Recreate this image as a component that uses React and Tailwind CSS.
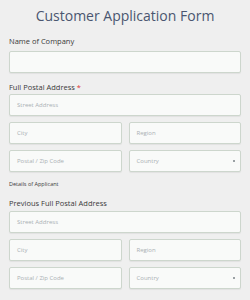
function Field({ placeholder, select }) {
  return (
    <div className="h-[22px] flex items-center justify-between border border-[#cdd6cd] bg-[#f9faf9] rounded-[2px] pl-[7px] pr-[5px] shadow-[0_1px_1px_rgba(0,0,0,0.06)]">
      <span className="text-[6px] text-[#aab0b4]">{placeholder}</span>
      {select && <span className="w-[2px] h-[2px] bg-[#9aa0a4]"></span>}
    </div>
  )
}

function Address() {
  return (
    <div className="flex flex-col gap-[6px]">
      <Field placeholder="Street Address" />
      <div className="grid grid-cols-2 gap-[7px]">
        <Field placeholder="City" />
        <Field placeholder="Region" />
      </div>
      <div className="grid grid-cols-2 gap-[7px]">
        <Field placeholder="Postal / Zip Code" />
        <Field placeholder="Country" select />
      </div>
    </div>
  )
}

export default function App() {
  return (
    <div
      className="w-[250px] h-[300px] overflow-hidden bg-[#efefef] px-[9px]"
      style={{ fontFamily: '"Open Sans", "Liberation Sans", sans-serif' }}
    >
      <h1 className="h-[30px] flex items-center justify-center text-[14px] text-[#4a5670]">
        Customer Application Form
      </h1>

      <p className="mt-[6px] h-[10px] leading-[10px] text-[7.5px] text-[#3a3a3a]">Name of Company</p>
      <div className="mt-[5px] h-[22px] border border-[#cdd6cd] bg-[#f9faf9] rounded-[2px] shadow-[0_1px_1px_rgba(0,0,0,0.06)]"></div>

      <p className="mt-[9px] h-[10px] leading-[10px] text-[7.5px] text-[#3a3a3a]">
        Full Postal Address <span className="text-[#d33]">*</span>
      </p>
      <div className="mt-[2px]">
        <Address />
      </div>

      <p className="mt-[7px] h-[10px] leading-[10px] text-[5.5px] text-[#3a3a3a]">Details of Applicant</p>

      <p className="mt-[9px] h-[10px] leading-[10px] text-[7.5px] text-[#3a3a3a]">Previous Full Postal Address</p>
      <div className="mt-[3px]">
        <Address />
      </div>
    </div>
  )
}
